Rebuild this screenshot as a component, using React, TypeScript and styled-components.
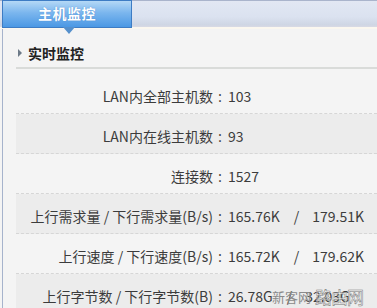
import React from "react";
import styled, { createGlobalStyle } from "styled-components";

const GlobalStyle = createGlobalStyle`
  html, body {
    margin: 0;
    padding: 0;
    background: #f4f4f4;
  }
  body {
    font-family: "Noto Sans CJK SC", "Open Sans", sans-serif;
  }
`;

type TRow = {
  shaded?: boolean;
};

const Page = styled.div`
  position: relative;
  width: 377px;
  height: 308px;
  overflow: hidden;
  background: #f4f4f4;
`;

const TabBar = styled.div`
  display: flex;
  height: 26px;
  border-top: 1px solid #aab4cc;
  background: linear-gradient(to bottom, #e2e7f3 0%, #dbe2f0 60%, #cfd6e4 92%, #d9dae4 100%);
  border-bottom: 2px solid #fbf7ef;
`;

const Tab = styled.div`
  position: relative;
  box-sizing: border-box;
  width: 130px;
  height: 28px;
  margin-top: -1px;
  margin-left: 2px;
  display: flex;
  align-items: center;
  justify-content: center;
  padding-bottom: 2px;
  border: 1px solid #3d7cc4;
  background: linear-gradient(to bottom, #b4d8f6 0%, #7bb6ee 45%, #4b98e4 100%);
  color: #ffffff;
  font-size: 14px;
  font-weight: bold;
  letter-spacing: 0.5px;
  text-shadow: 0 0 1px #3d7cc4;
  z-index: 1;

  &::after {
    content: "";
    position: absolute;
    left: 60px;
    bottom: -7px;
    border-left: 6px solid transparent;
    border-right: 6px solid transparent;
    border-top: 7px solid #5590cc;
  }
`;

const Body = styled.div`
  margin-left: 2px;
  border-left: 1px solid #a6b3cc;
  padding-left: 13px;
  height: 300px;
`;

const SectionTitle = styled.div`
  display: flex;
  align-items: center;
  gap: 6px;
  height: 28px;
  padding-top: 10px;
  padding-left: 2px;
  border-bottom: 2px solid #d9dbd9;
  font-size: 14px;
  font-weight: bold;
  color: #222222;

  &::before {
    content: "";
    border-top: 4px solid transparent;
    border-bottom: 4px solid transparent;
    border-left: 4px solid #6d7a88;
  }
`;

const List = styled.div`
  margin-top: 5px;
`;

const Row = styled.div<TRow>`
  display: grid;
  grid-template-columns: 197px 14px 1fr;
  align-items: center;
  height: 35px;
  padding-top: 4px;
  box-sizing: content-box;
  border-bottom: 1px dashed #d6d6d6;
  background: ${(props) => (props.shaded ? "#ececec" : "#f4f4f4")};
  font-size: 14px;
  color: #3c3c3c;
  white-space: nowrap;
`;

const Label = styled.span`
  text-align: right;
`;

const Colon = styled.span`
  text-align: center;
  font-family: "Open Sans", sans-serif;
  font-size: 15px;
`;

const Value = styled.span`
  margin-left: 1px;
`;

const Slash = styled.span`
  margin: 0 13px 0 14px;
`;

const Watermark = styled.div`
  position: absolute;
  left: 272px;
  top: 284px;
  display: flex;
  align-items: center;
  gap: 4px;
  font-family: "Liberation Serif", "Noto Sans CJK SC", serif;
  font-size: 13px;
  color: #8a8a8a;
`;

const WatermarkBig = styled.span`
  font-family: "Noto Sans CJK SC", sans-serif;
  font-size: 17px;
  color: rgba(255, 255, 255, 0.7);
  -webkit-text-stroke: 0.5px #777777;
  letter-spacing: -1px;
`;

const rows = [
  { label: "LAN内全部主机数", value: ["103"] },
  { label: "LAN内在线主机数", value: ["93"] },
  { label: "连接数", value: ["1527"] },
  { label: "上行需求量 / 下行需求量(B/s)", value: ["165.76K", "179.51K"] },
  { label: "上行速度 / 下行速度(B/s)", value: ["165.72K", "179.62K"] },
  { label: "上行字节数 / 下行字节数(B)", value: ["26.78G", "32.03G"] },
];

export default function App() {
  return (
    <Page>
      <GlobalStyle />
      <TabBar>
        <Tab>主机监控</Tab>
      </TabBar>
      <Body>
        <SectionTitle>实时监控</SectionTitle>
        <List>
          {rows.map((row, i) => (
            <Row key={row.label} shaded={i % 2 === 1}>
              <Label>{row.label}</Label>
              <Colon>:</Colon>
              <Value>
                {row.value[0]}
                {row.value[1] && (
                  <>
                    <Slash>/</Slash>
                    {row.value[1]}
                  </>
                )}
              </Value>
            </Row>
          ))}
        </List>
      </Body>
      <Watermark>
        新客网
        <WatermarkBig>路由网</WatermarkBig>
      </Watermark>
    </Page>
  );
}
